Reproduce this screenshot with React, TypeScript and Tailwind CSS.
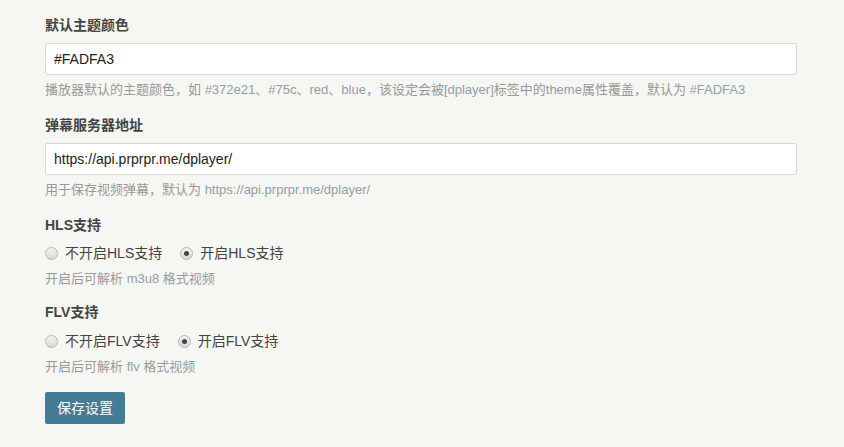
import React from 'react';

const font = { fontFamily: '"Liberation Sans", Arial, "Noto Sans CJK SC", sans-serif' };

function Radio({ checked, label }: { checked?: boolean; label: React.ReactNode }) {
  return (
    <label className="flex items-center gap-[7px] text-[14px] leading-5 text-[#444]">
      <span className="flex h-[13px] w-[13px] items-center justify-center rounded-full border border-[#b5b5b5] bg-gradient-to-b from-[#f4f4f4] to-[#d8d8d8]">
        {checked && <span className="h-[5px] w-[5px] rounded-full bg-[#444]" />}
      </span>
      <span>{label}</span>
    </label>
  );
}

function Code({ children }: { children: React.ReactNode }) {
  return <span className="text-[#8f9eaa]">{children}</span>;
}

export default function App() {
  return (
    <div className="min-h-screen bg-[#f6f6f3] pl-[45px] pr-[47px] pt-[15px]" style={font}>
      <div className="mb-4">
        <div className="mb-2 text-[14px] font-bold leading-5 text-[#444]">默认主题颜色</div>
        <input
          type="text"
          defaultValue="#FADFA3"
          className="block h-[32px] w-full rounded-[2px] border border-[#d9d9d6] bg-white px-[8px] text-[14px] text-[#222] outline-none"
        />
        <div className="mt-[6px] text-[13px] leading-[18px] text-[#999]">
          播放器默认的主题颜色，如 <Code>#372e21</Code>、<Code>#75c</Code>、<Code>red</Code>、<Code>blue</Code>，该设定会被<Code>[dplayer]</Code>标签中的<Code>theme</Code>属性覆盖，默认为 <Code>#FADFA3</Code>
        </div>
      </div>

      <div className="mb-4">
        <div className="mb-2 text-[14px] font-bold leading-5 text-[#444]">弹幕服务器地址</div>
        <input
          type="text"
          defaultValue="https://api.prprpr.me/dplayer/"
          className="block h-[32px] w-full rounded-[2px] border border-[#d9d9d6] bg-white px-[8px] text-[14px] text-[#222] outline-none"
        />
        <div className="mt-[6px] text-[13px] leading-[18px] text-[#999]">
          用于保存视频弹幕，默认为 <Code>https://api.prprpr.me/dplayer/</Code>
        </div>
      </div>

      <div className="mb-[14px]">
        <div className="mb-2 text-[14px] font-bold leading-5 text-[#444]">HLS支持</div>
        <div className="flex gap-[18px]">
          <Radio label="不开启HLS支持" />
          <Radio checked label="开启HLS支持" />
        </div>
        <div className="mt-[7px] text-[13px] leading-[18px] text-[#999]">
          开启后可解析 <Code>m3u8</Code> 格式视频
        </div>
      </div>

      <div className="mb-4">
        <div className="mb-[9px] text-[14px] font-bold leading-5 text-[#444]">FLV支持</div>
        <div className="flex gap-[18px]">
          <Radio label="不开启FLV支持" />
          <Radio checked label="开启FLV支持" />
        </div>
        <div className="mt-[7px] text-[13px] leading-[18px] text-[#999]">
          开启后可解析 <Code>flv</Code> 格式视频
        </div>
      </div>

      <button
        type="button"
        className="h-[32px] w-[80px] rounded-[2px] bg-[#467b96] text-[14px] text-white"
      >
        保存设置
      </button>
    </div>
  );
}
